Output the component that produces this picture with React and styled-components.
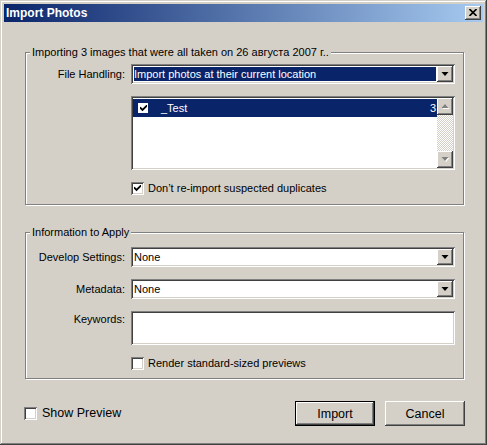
import React from 'react';
import styled, { createGlobalStyle, css } from 'styled-components';

const Global = createGlobalStyle`
  html, body { margin: 0; padding: 0; background: #d4d0c8; }
  body {
    font-family: "Liberation Sans", Arial, sans-serif;
    font-size: 11px;
    color: #000;
  }
  *, *::before, *::after { box-sizing: border-box; }
`;

const raised = css`
  background: #d4d0c8;
  box-shadow: inset -1px -1px 0 #404040, inset 1px 1px 0 #fff, inset -2px -2px 0 #808080;
`;

const sunken = css`
  box-shadow: inset 1px 1px 0 #808080, inset -1px -1px 0 #fff, inset 2px 2px 0 #404040, inset -2px -2px 0 #d4d0c8;
  padding: 2px;
`;

const Window = styled.div`
  width: 487px;
  height: 445px;
  padding: 4px;
  display: flex;
  flex-direction: column;
  background: #d4d0c8;
  box-shadow: inset -1px -1px 0 #404040, inset 1px 1px 0 #d4d0c8, inset -2px -2px 0 #808080, inset 2px 2px 0 #fff;
`;

const TitleBar = styled.div`
  height: 18px;
  display: flex;
  align-items: center;
  justify-content: space-between;
  padding: 0 2px 0 2px;
  background: linear-gradient(to right, #0a246a 0%, #a6caf0 100%);
`;

const TitleText = styled.span`
  color: #fff;
  font-weight: bold;
  font-size: 12px;
  line-height: 18px;
`;

const CloseButton = styled.div`
  width: 16px;
  height: 14px;
  ${raised};
  display: grid;
  place-items: center;
  padding-bottom: 1px;
`;

const Content = styled.div`
  display: flex;
  flex-direction: column;
  padding: 24px 19px 0 21px;
`;

const Group = styled.fieldset`
  margin: ${p => p.$gap || 0}px 0 0 0;
  padding: 0;
  min-width: 0;
  border: 1px solid #808080;
  box-shadow: inset 1px 1px 0 #fff, 1px 1px 0 #fff;
`;

const Legend = styled.legend`
  margin-left: 4px;
  padding: 0 2px;
  line-height: 13px;
  font-size: 11px;
  background: #d4d0c8;
`;

const FormGrid = styled.div`
  display: grid;
  grid-template-columns: 99px 324px;
  column-gap: 6px;
  row-gap: 12px;
  align-items: center;
  padding: ${p => p.$top}px 0 ${p => p.$bottom}px 0;
`;

const Label = styled.div`
  text-align: right;
  white-space: nowrap;
  line-height: 13px;
  align-self: ${p => (p.$top ? 'start' : 'center')};
  padding-top: ${p => (p.$top ? 2 : 0)}px;
`;

const SelectBox = styled.div`
  height: 20px;
  ${sunken};
  background: #fff;
  display: flex;
`;

const SelectValue = styled.div`
  flex: 1;
  margin: 1px;
  padding-left: 0;
  line-height: 14px;
  white-space: nowrap;
  overflow: hidden;
  background: ${p => (p.$selected ? '#0a246a' : '#fff')};
  color: ${p => (p.$selected ? '#fff' : '#000')};
`;

const DropButton = styled.div`
  width: 16px;
  height: 16px;
  ${raised};
  display: grid;
  place-items: center;
`;

const ListBox = styled.div`
  height: 74px;
  ${sunken};
  background: #fff;
  display: flex;
`;

const ListRows = styled.div`
  flex: 1;
  padding-top: 1px;
`;

const ListRow = styled.div`
  height: 18px;
  display: flex;
  align-items: center;
  padding: 0 1px 0 5px;
  background: #0a246a;
  color: #fff;
`;

const RowCheck = styled.div`
  width: 10px;
  height: 10px;
  background: #fff;
  display: grid;
  place-items: center;
`;

const RowName = styled.span`
  margin-left: 13px;
  line-height: 13px;
`;

const RowCount = styled.span`
  margin-left: auto;
  line-height: 13px;
`;

const ScrollBar = styled.div`
  width: 16px;
  display: flex;
  flex-direction: column;
`;

const ScrollButton = styled.div`
  width: 16px;
  height: 17px;
  ${raised};
  display: grid;
  place-items: center;
`;

const ScrollTrack = styled.div`
  flex: 1;
  background-color: #fff;
  background-image: conic-gradient(#d4d0c8 25%, #fff 0 50%, #d4d0c8 0 75%, #fff 0);
  background-size: 2px 2px;
`;

const CheckRow = styled.label`
  display: flex;
  align-items: center;
  gap: ${p => p.$gap || 4}px;
  line-height: 13px;
  font-size: ${p => p.$size || 11}px;
  white-space: nowrap;
`;

const Box = styled.span`
  width: 13px;
  height: 13px;
  flex: none;
  ${sunken};
  background: #fff;
  display: grid;
  place-items: center;
`;

const TextArea = styled.div`
  height: 34px;
  ${sunken};
  background: #fff;
`;

const Footer = styled.div`
  display: flex;
  align-items: center;
  margin-top: 22px;
  padding: 0 18px 0 20px;
`;

const Buttons = styled.div`
  margin-left: auto;
  display: flex;
  gap: 10px;
`;

const Button = styled.button`
  width: 80px;
  height: 25px;
  padding: 0;
  font-family: "Liberation Sans", Arial, sans-serif;
  font-size: 12.5px;
  color: #000;
  border: ${p => (p.$default ? '1px solid #000' : 'none')};
  ${raised};
`;

const DownArrow = ({ disabled }) => (
  <svg width="8" height="5" viewBox="0 0 8 5">
    {disabled && <polygon points="1.5,1 8.5,1 5,5" fill="#fff" />}
    <polygon points="0.5,0 7.5,0 4,4" fill={disabled ? '#808080' : '#000'} />
  </svg>
);

const UpArrow = ({ disabled }) => (
  <svg width="8" height="5" viewBox="0 0 8 5">
    {disabled && <polygon points="1.5,5 8.5,5 5,1" fill="#fff" />}
    <polygon points="0.5,4 7.5,4 4,0" fill={disabled ? '#808080' : '#000'} />
  </svg>
);

const Check = ({ size = 7 }) => (
  <svg width={size} height={size} viewBox="0 0 7 7">
    <path d="M0.5 3 L2.5 5 L6.5 1" fill="none" stroke="#000" strokeWidth="1.8" strokeLinecap="square" />
  </svg>
);

const Select = ({ value, selected }) => (
  <SelectBox>
    <SelectValue $selected={selected}>{value}</SelectValue>
    <DropButton><DownArrow /></DropButton>
  </SelectBox>
);

const Checkbox = ({ checked, children, size, gap }) => (
  <CheckRow $size={size} $gap={gap}>
    <Box>{checked && <Check />}</Box>
    <span>{children}</span>
  </CheckRow>
);

export default function App() {
  return (
    <>
      <Global />
      <Window>
        <TitleBar>
          <TitleText>Import Photos</TitleText>
          <CloseButton>
            <svg width="8" height="7" viewBox="0 0 8 7">
              <path d="M0.5 0 L7.5 7 M7.5 0 L0.5 7" stroke="#000" strokeWidth="1.6" />
            </svg>
          </CloseButton>
        </TitleBar>
        <Content>
          <Group>
            <Legend>Importing 3 images that were all taken on 26 августа 2007 г..</Legend>
            <FormGrid $top={5} $bottom={9}>
              <Label>File Handling:</Label>
              <Select value="Import photos at their current location" selected />
              <span />
              <ListBox>
                <ListRows>
                  <ListRow>
                    <RowCheck><Check /></RowCheck>
                    <RowName>_Test</RowName>
                    <RowCount>3</RowCount>
                  </ListRow>
                </ListRows>
                <ScrollBar>
                  <ScrollButton><UpArrow disabled /></ScrollButton>
                  <ScrollTrack />
                  <ScrollButton><DownArrow disabled /></ScrollButton>
                </ScrollBar>
              </ListBox>
              <span />
              <Checkbox checked>Don’t re-import suspected duplicates</Checkbox>
            </FormGrid>
          </Group>
          <Group $gap={21}>
            <Legend>Information to Apply</Legend>
            <FormGrid $top={8} $bottom={8}>
              <Label>Develop Settings:</Label>
              <Select value="None" />
              <Label>Metadata:</Label>
              <Select value="None" />
              <Label $top>Keywords:</Label>
              <TextArea />
              <span />
              <Checkbox>Render standard-sized previews</Checkbox>
            </FormGrid>
          </Group>
        </Content>
        <Footer>
          <Checkbox size={12.5} gap={5}>Show Preview</Checkbox>
          <Buttons>
            <Button $default>Import</Button>
            <Button>Cancel</Button>
          </Buttons>
        </Footer>
      </Window>
    </>
  );
}
